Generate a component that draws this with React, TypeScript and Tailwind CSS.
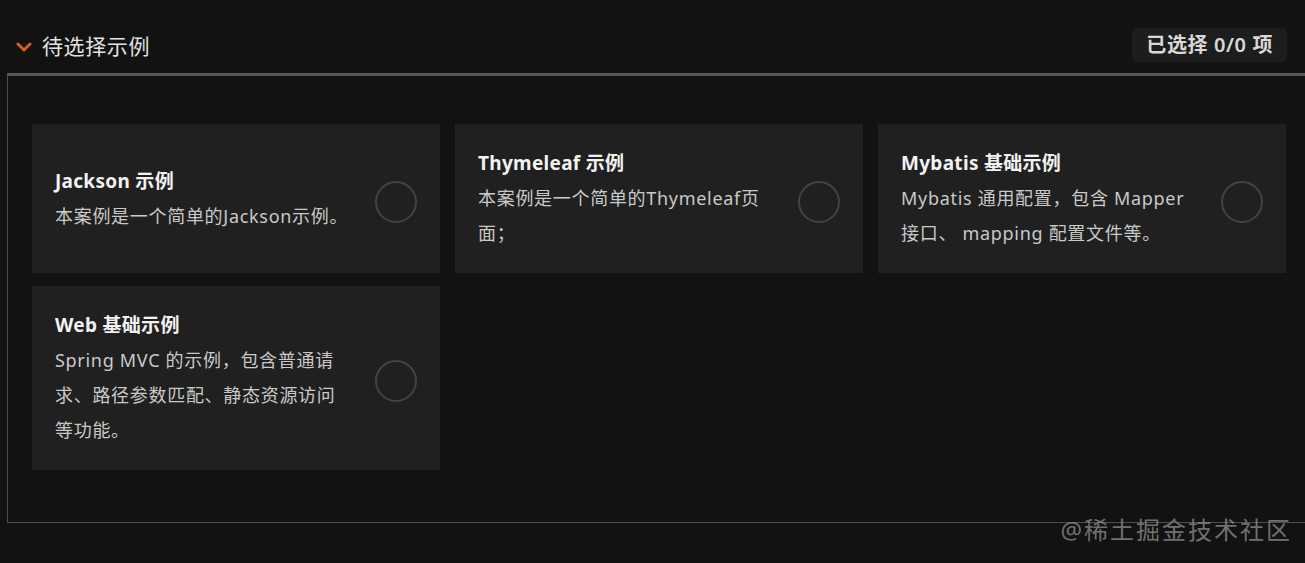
const examples = [
  {
    title: "Jackson 示例",
    desc: "本案例是一个简单的Jackson示例。",
  },
  {
    title: "Thymeleaf 示例",
    desc: "本案例是一个简单的Thymeleaf页面；",
  },
  {
    title: "Mybatis 基础示例",
    desc: "Mybatis 通用配置，包含 Mapper 接口、 mapping 配置文件等。",
  },
  {
    title: "Web 基础示例",
    desc: "Spring MVC 的示例，包含普通请求、路径参数匹配、静态资源访问等功能。",
  },
];

const font = "[font-family:'Noto_Sans','Noto_Sans_CJK_SC',sans-serif]";

export default function App() {
  return (
    <div className={`relative min-h-[563px] bg-[#121212] pt-[28px] overflow-hidden ${font}`}>
      {/* header */}
      <div className="flex h-[34px] items-center justify-between pl-[16px] pr-[18px]">
        <div className="flex items-center gap-[10px]">
          <svg width="16" height="10" viewBox="0 0 16 10" className="mt-[4px]">
            <polyline
              points="2,2 8,8 14,2"
              fill="none"
              stroke="#d5601c"
              strokeWidth="3"
              strokeLinecap="round"
              strokeLinejoin="round"
            />
          </svg>
          <span className="mt-[2px] text-[21px] leading-none tracking-[0.6px] text-[#e2e2e2]">待选择示例</span>
        </div>
        <div className="flex h-[34px] items-center rounded-[5px] bg-[#1d1d1d] px-[14px] text-[20px] font-semibold tracking-[0.6px] text-[#d8d8d8]">
          已选择 0/0 项
        </div>
      </div>

      {/* list box */}
      <div className="mt-[11px] ml-[7px] mr-[-24px] border-l border-b border-t-[3px] border-[#4d4d4d] border-t-[#565656] px-[24px] pt-[48px] pb-[52px]">
        <div className="grid grid-cols-[408px_408px_408px] gap-x-[15px] gap-y-[13px]">
          {examples.map((ex, i) => (
            <div key={i} className="flex items-center bg-[#202020] px-[23px] py-[22px]">
              <div className="w-[299px]">
                <div className="text-[19px] font-bold leading-[35px] tracking-[0.3px] text-[#f2f2f2]">{ex.title}</div>
                <div className="text-[18px] leading-[35px] tracking-[0.7px] text-[#c9c9c9]">{ex.desc}</div>
              </div>
              <div className="ml-auto mt-[6px] h-[42px] w-[42px] shrink-0 rounded-full border-2 border-[#434343]" />
            </div>
          ))}
        </div>
      </div>

      <div className="absolute right-[13px] top-[515px] text-[24px] leading-[30px] tracking-[2px] text-[#8a8a8a]/80">
        @稀土掘金技术社区
      </div>
    </div>
  );
}
